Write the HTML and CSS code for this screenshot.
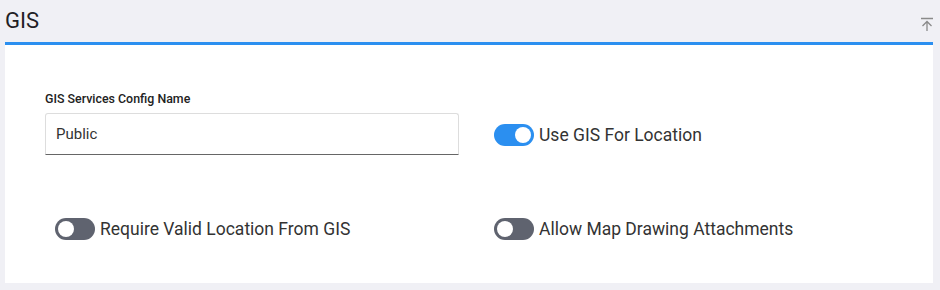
FILE: index.html
```html
<!DOCTYPE html>
<html lang="en">
<head>
    <meta charset="UTF-8">
    <title>GIS</title>
    <link rel="stylesheet" href="styles.css">
</head>
<body>
    <div class="panel">
        <div class="panel-header">
            <div class="panel-title">GIS</div>
            <svg class="collapse-icon" width="14" height="16" viewBox="0 0 14 16">
                <path d="M1 2.5 H13 M7 15 V5.5 M2.5 10 L7 5.5 L11.5 10" fill="none" stroke="#8a8a8a" stroke-width="1.3"/>
            </svg>
        </div>
        <div class="panel-body">
            <div class="row">
                <div class="field">
                    <label class="field-label">GIS Services Config Name</label>
                    <input class="text-input" type="text" value="Public">
                </div>
                <div class="toggle-item">
                    <span class="switch on"><span class="knob"></span></span>
                    <span class="toggle-label">Use GIS For Location</span>
                </div>
            </div>
            <div class="row row-bottom">
                <div class="toggle-item first">
                    <span class="switch"><span class="knob"></span></span>
                    <span class="toggle-label">Require Valid Location From GIS</span>
                </div>
                <div class="toggle-item">
                    <span class="switch"><span class="knob"></span></span>
                    <span class="toggle-label">Allow Map Drawing Attachments</span>
                </div>
            </div>
        </div>
    </div>
</body>
</html>
```

FILE: styles.css
```css
body {
    margin: 0;
    background-color: #f0f0f5;
    font-family: Roboto, "Liberation Sans", sans-serif;
    color: #333;
}

.panel {
    width: 928px;
    margin-left: 5px;
}

.panel-header {
    height: 42px;
    display: flex;
    justify-content: space-between;
    align-items: flex-start;
    border-bottom: 3px solid #2b8ff0;
}

.panel-title {
    font-size: 22px;
    color: #1f2125;
    line-height: 42px;
}

.collapse-icon {
    margin-top: 16px;
    margin-right: -1px;
}

.panel-body {
    background: #fff;
    height: 238px;
    padding: 0 40px;
    box-sizing: border-box;
}

.row {
    display: flex;
}

.field {
    width: 414px;
    padding-top: 47px;
}

.field-label {
    display: block;
    font-size: 12.4px;
    font-weight: 500;
    color: #222;
    height: 14px;
    line-height: 14px;
}

.text-input {
    display: block;
    margin-top: 7px;
    width: 414px;
    height: 42px;
    box-sizing: border-box;
    border: 1px solid #ddd;
    border-bottom: 1px solid #666;
    border-radius: 3px 3px 0 0;
    padding: 0 10px;
    font-family: Roboto, "Liberation Sans", sans-serif;
    font-size: 15px;
    color: #333;
    outline: none;
}

.toggle-item {
    display: flex;
    align-items: center;
    gap: 5px;
}

.row:first-child .toggle-item {
    margin-left: 35px;
    margin-top: 79px;
    align-self: flex-start;
}

.row-bottom {
    margin-top: 63px;
}

.row-bottom .toggle-item.first {
    margin-left: 10px;
    width: 439px;
}

.switch {
    width: 40px;
    height: 22px;
    border-radius: 11px;
    background: #5f636f;
    position: relative;
    flex-shrink: 0;
}

.switch .knob {
    position: absolute;
    top: 3px;
    left: 3px;
    width: 16px;
    height: 16px;
    border-radius: 50%;
    background: #fff;
}

.switch.on {
    background: #2b8ff0;
}

.switch.on .knob {
    left: 21px;
}

.toggle-label {
    font-size: 17.5px;
    color: #333;
}
```
